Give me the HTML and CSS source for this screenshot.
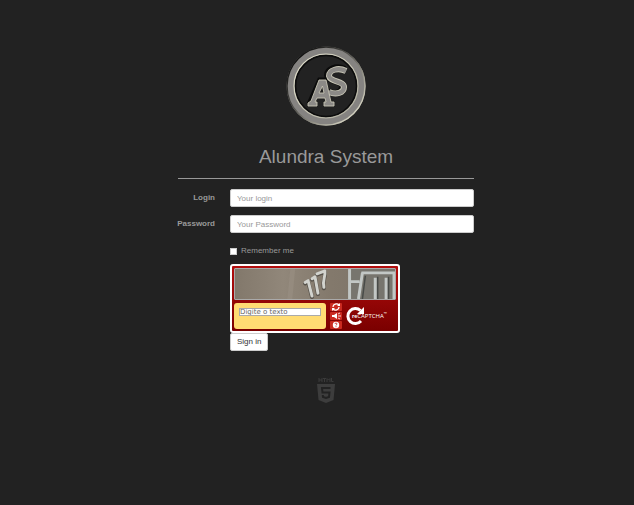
FILE: index.html
```html
<!DOCTYPE html>
<html lang="en">
<head>
<meta charset="utf-8">
<title>Alundra System</title>
<link rel="stylesheet" href="styles.css">
</head>
<body>
<main class="login">
  <header class="brand">
    <svg class="brand-logo" viewBox="0 0 80 82" role="img" aria-label="AS logo">
      <defs>
        <linearGradient id="rim" x1="0" y1="0" x2="1" y2="1">
          <stop offset="0.1" stop-color="#080808"/><stop offset="0.45" stop-color="#55544f"/><stop offset="0.85" stop-color="#d0cebd"/>
        </linearGradient>
        <linearGradient id="inner" x1="0" y1="0" x2="1" y2="1">
          <stop offset="0.15" stop-color="#dddbc8"/><stop offset="0.85" stop-color="#b5b3a3"/>
        </linearGradient>
      </defs>
      <circle cx="40" cy="41" r="35.500" fill="none" stroke="#858381" stroke-width="8"/>
      <circle cx="40" cy="41" r="39" fill="none" stroke="url(#rim)" stroke-width="1.4"/>
      <circle cx="40" cy="41" r="30.500" fill="none" stroke="#0c0c0c" stroke-width="1.5"/>
      <circle cx="40" cy="41" r="32" fill="none" stroke="url(#inner)" stroke-width="1.2"/>
      <g fill="none" stroke="#0b0b0b">
        <path d="M59 24C50 20 41 24 41 30C42 37 56 36 56 41C56 48 48 50 41 46" stroke-width="6"/>
        <path d="M22 59L33 34H38L44 59" stroke-width="3"/>
      </g>
      <path d="M60 26C52 22 43 25 43 31C44 37 58 36 58 42C58 48 50 50 43 47" fill="none" stroke="#c8c6b6" stroke-width="6"/>
      <path d="M60 26C52 22 43 25 43 31C44 37 58 36 58 42C58 48 50 50 43 47" fill="none" stroke="#8c8a87" stroke-width="4.2"/>
      <path d="M22 61V58L25 56L33 35H40L45 57H48V61H38V57H40L39 53H31L29 57H31V61zM33 48H38L36.500 41z" fill="#8c8a87" fill-rule="evenodd" stroke="#c8c6b6" stroke-width=".9"/>
    </svg>
    <h1>Alundra System</h1>
  </header>
  <form class="form">
    <label class="label" for="login">Login</label>
    <input class="field" id="login" type="text" placeholder="Your login">
    <label class="label" for="password">Password</label>
    <input class="field" id="password" type="password" placeholder="Your Password">
    <div class="actions">
      <label class="remember"><input type="checkbox"> Remember me</label>
      <div class="captcha">
        <svg class="challenge" viewBox="0 0 162 31" preserveAspectRatio="none" role="img" aria-label="Captcha image">
          <defs>
            <linearGradient id="wall" x1="0" x2="1">
              <stop offset="0" stop-color="#82786b"/><stop offset="0.3" stop-color="#91877a"/><stop offset="0.6" stop-color="#83796c"/><stop offset="1" stop-color="#7b7367"/>
            </linearGradient>
          </defs>
          <path fill="url(#wall)" d="M0 0H162V31H0z"/>
          <path fill="#9b9285" d="M56 0h5l-3 31h-5z" opacity=".5"/>
          <path fill="#77756e" d="M115 0H162V31H115z"/>
          <g fill="none" stroke-linecap="round" stroke-linejoin="round">
            <path d="M71 15l3-2l4 16M78 11l3-2l3 17M83 6l8-3c1 6-3 10-1 17" stroke="#57524b" stroke-width="4"/>
            <path d="M71 14l3-2l4 16M78 10l3-2l3 17M83 5l8-3c1 6-3 10-1 17" stroke="#d2d3ce" stroke-width="3"/>
          </g>
          <path d="M129 4L125 31M128 4H162M115 13H126M142 9V31M153 9V31M161 5V31M116 0V31" fill="none" stroke="#c2c7c5" stroke-width="3"/>
          <path d="M132 7L129 31M144.500 8V31M155.500 8V31" stroke="#484b48" stroke-width="1.5"/>
        </svg>
        <div class="captcha-row">
          <div class="answer"><input type="text" aria-label="Captcha text" placeholder="Digite o texto"></div>
          <div class="tools">
            <button type="button" aria-label="New challenge"><svg viewBox="0 0 12 8"><path d="M3 4C3 1 7 0 9 2M9 4C9 7 5 8 3 6" fill="none" stroke="#fff" stroke-width="1.3"/><path d="M10 0v3H7zM2 8V5h3z" fill="#fff"/></svg></button>
            <button type="button" aria-label="Audio challenge"><svg viewBox="0 0 12 8"><path d="M2 3h2l3-2v6L4 5H2z" fill="#fff"/><path d="M8 2l2-1M8 4h3M8 6l2 1" stroke="#fff" stroke-width=".8"/></svg></button>
            <button type="button" aria-label="Help"><svg viewBox="0 0 12 8"><circle cx="6" cy="4" r="3.2" fill="#fff"/><path d="M5 3c0-1.400 2-1.400 2 0L6 4.500M6 5.200v1" fill="none" stroke="#c22" stroke-width=".8"/></svg></button>
          </div>
          <div class="recaptcha">
            <svg viewBox="0 0 20 20" aria-hidden="true"><path d="M14.500 4.500A7.500 7.500 0 1 0 15 15" fill="none" stroke="#fff" stroke-width="3"/><path d="M18 1V8H11z" fill="#fff"/></svg>
            <span class="word"><b>re</b>CAPTCHA<sup>™</sup></span>
          </div>
        </div>
      </div>
      <button class="submit" type="submit">Sign in</button>
    </div>
  </form>
  <footer class="badge">
    <svg viewBox="0 0 18 25" role="img" aria-label="HTML5">
      <path d="M2 0V4M5 0V4M2 2H5M6 .5H9M7.500 .5V4M10 4V.500L11.500 2L13 .500V4M14.500 0V3.500H16.500" fill="none" stroke="#3b3b3b"/>
      <path d="M0 6H18L16.500 22L9 25L1.500 22z" fill="#3d3d3d"/>
      <path d="M13.500 10H5L5.500 14.500H12.500L12 19L9 20L6 19L5.800 17" fill="none" stroke="#222" stroke-width="2"/>
    </svg>
  </footer>
</main>
</body>
</html>
```
FILE: styles.css
```css
* { box-sizing: border-box; }
body {
  margin: 0;
  padding: 45px 0 0 18px;
  background: #222;
  color: #999;
  font: 8px/12px "Liberation Sans", Arial, sans-serif;
}
input, button { font: inherit; margin: 0; }
svg { display: block; }
.login { width: 48%; min-width: 296px; margin: 0 auto; max-width: 480px; }
.brand { border-bottom: 1px solid #999; }
.brand-logo { width: 80px; height: 82px; margin: 0 auto; }
h1 { margin: 18px 0 9px; font-size: 19px; line-height: 24px; font-weight: 400; text-align: center; }
.form { display: grid; grid-template-columns: 37px 1fr; column-gap: 15px; row-gap: 8px; align-items: center; padding-top: 10px; }
.label { font-weight: 700; text-align: right; white-space: nowrap; justify-self: end; }
.field {
  width: 100%; height: 18px; padding: 0 6px;
  border: 1px solid #ccc; border-radius: 2px; background: #fff; color: #555;
}
.field::placeholder { color: #999; opacity: 1; }
.actions { grid-column: 2; display: flex; flex-direction: column; align-items: flex-start; }
.remember { display: flex; align-items: center; gap: 4px; margin: 4px 0 7px; }
.remember input { appearance: none; width: 7px; height: 7px; background: #fff; border: 1px solid #ccc; }
.captcha {
  width: 170px; padding: 2px; border: 2px solid #fff; border-radius: 3px;
  background: linear-gradient(#b30d0d, #7a0000);
}
.challenge { width: 100%; height: 32px; border: 1px solid #aaa; border-radius: 1px; }
.captcha-row { display: flex; align-items: center; gap: 4px; padding-top: 3px; }
.answer { width: 92px; height: 26px; padding: 5px; border-radius: 3px; background: #ffdc73; }
.answer input {
  display: block; width: 82px; height: 8px; padding: 0; border: 1px solid #aaa;
  background: #fff; font: 7px/7px "DejaVu Sans", Verdana, sans-serif;
}
.answer input::placeholder { color: #666; opacity: 1; }
.tools { display: flex; flex-direction: column; gap: 1px; }
.tools button { width: 12px; height: 8px; padding: 0; border: 0; border-radius: 1px; background: #ca2a20; }
.tools svg { width: 12px; height: 8px; }
.recaptcha { display: flex; align-items: center; color: #fff; }
.recaptcha svg { width: 20px; height: 20px; }
.word { margin-left: -14px; font: 6px/8px "Open Sans", sans-serif; white-space: nowrap; }
.word b { font-size: 5px; }
.word sup { font-size: 4px; line-height: 4px; }
.submit { height: 18px; padding: 0 6px; border: 1px solid #ccc; border-radius: 2px; background: #fff; color: #333; }
.badge { margin-top: 27px; }
.badge svg { width: 18px; height: 25px; margin: 0 auto; }
```
